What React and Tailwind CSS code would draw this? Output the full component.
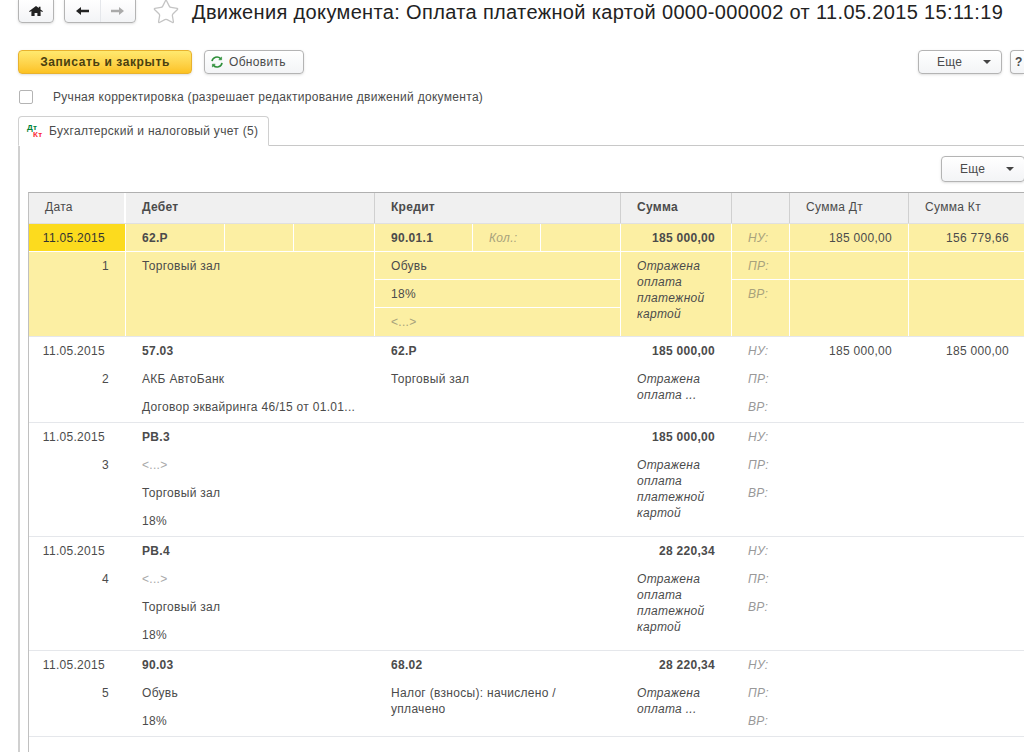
import React from 'react';
import clsx from 'clsx';
import { Star } from 'lucide-react';

const gridCols = 'grid grid-cols-[97px_249px_246px_111px_58px_119px_116px]';
const btn = 'flex items-center border border-[#b4b4b4] bg-gradient-to-b from-white to-gray-100 shadow-sm text-xs tracking-wide text-[#4b4b4b]';

const rows = [
  {
    selected: true,
    date: '11.05.2015', n: 1, debit: '62.Р', debitSub: ['Торговый зал'],
    credit: '90.01.1', creditSub: ['Обувь', '18%', '<...>'],
    sum: '185 000,00', note: 'Отражена оплата платежной картой', dt: '185 000,00', kt: '156 779,66',
  },
  {
    date: '11.05.2015', n: 2, debit: '57.03', debitSub: ['АКБ АвтоБанк', 'Договор эквайринга 46/15 от 01.01...'],
    credit: '62.Р', creditSub: ['Торговый зал'],
    sum: '185 000,00', note: 'Отражена оплата ...', dt: '185 000,00', kt: '185 000,00',
  },
  {
    date: '11.05.2015', n: 3, debit: 'РВ.3', debitSub: ['<...>', 'Торговый зал', '18%'],
    sum: '185 000,00', note: 'Отражена оплата платежной картой',
  },
  {
    date: '11.05.2015', n: 4, debit: 'РВ.4', debitSub: ['<...>', 'Торговый зал', '18%'],
    sum: '28 220,34', note: 'Отражена оплата платежной картой',
  },
  {
    date: '11.05.2015', n: 5, debit: '90.03', debitSub: ['Обувь', '18%'],
    credit: '68.02', creditSub: ['Налог (взносы): начислено / уплачено'],
    sum: '28 220,34', note: 'Отражена оплата ...',
  },
];

const Caret = () => (
  <svg width="8" height="4" viewBox="0 0 8 4" className="fill-[#444444]">
    <path d="M0 0h8L4 4z" />
  </svg>
);

const MoreButton = ({ className }) => (
  <button className={clsx(btn, 'w-21 shrink-0 justify-between rounded pl-4.5 pr-2.5', className)}>
    <span>Еще</span>
    <Caret />
  </button>
);

const Sub = ({ selected, line = true, className, children }) => (
  <div className={clsx('h-7 shrink-0 pt-1.5 leading-4', selected && line && 'border-b border-white', className)}>
    {children}
  </div>
);

const Column = ({ selected, className, children }) => (
  <div className={clsx('flex flex-col border-r', selected ? 'border-white' : 'border-transparent', className)}>
    {children}
  </div>
);

const isPlaceholder = (text) => text === '<...>';

const Row = ({ row }) => {
  const { selected } = row;
  const label = selected ? 'italic text-[#a8a27c]' : 'italic text-[#999999]';
  return (
    <div className={clsx(gridCols, 'border-b border-gray-200', selected ? 'bg-[#fcefa3]' : 'pb-px')}>
      <Column selected={selected}>
        <Sub selected={selected} className={clsx('pr-5 text-right', selected && 'bg-[#fcdb1e] text-[#333333]')}>
          {row.date}
        </Sub>
        <Sub className="pr-4 text-right">{row.n}</Sub>
      </Column>

      <Column selected={selected}>
        <Sub selected={selected} className="flex !pt-0">
          <div className={clsx('w-[99px] pl-4 pt-1.5 font-bold', selected && 'border-r border-white')}>{row.debit}</div>
          {selected && <div className="w-[69px] border-r border-white" />}
        </Sub>
        {row.debitSub.map((text, i) => (
          <Sub key={i} className={clsx('truncate px-4', isPlaceholder(text) && 'text-[#a8a8a8]')}>{text}</Sub>
        ))}
      </Column>

      <Column selected={selected}>
        <Sub selected={selected} className="flex !pt-0">
          <div className={clsx('w-[98px] pl-4 pt-1.5 font-bold', selected && 'border-r border-white')}>{row.credit}</div>
          {selected && (
            <div className={clsx('w-[68px] border-r border-white pl-4 pt-1.5', label)}>Кол.:</div>
          )}
        </Sub>
        {(row.creditSub || []).map((text, i) => (
          <Sub
            key={i}
            selected={selected}
            line={i < 2}
            className={clsx('px-4', isPlaceholder(text) && 'text-[#a8a27c]')}
          >
            {text}
          </Sub>
        ))}
      </Column>

      <Column selected={selected}>
        <Sub selected={selected} className="pr-4 text-right font-bold">{row.sum}</Sub>
        <div className="px-4 pt-1.5 italic leading-4">{row.note}</div>
      </Column>

      <Column selected={selected} className={label}>
        <Sub selected={selected} className="pl-4">НУ:</Sub>
        <Sub selected={selected} className="pl-4">ПР:</Sub>
        <Sub className="pl-4">ВР:</Sub>
      </Column>

      <Column selected={selected}>
        <Sub selected={selected} className="pr-4 text-right">{row.dt}</Sub>
        <Sub selected={selected} />
      </Column>

      <div className="flex flex-col">
        <Sub selected={selected} className="pr-4 text-right">{row.kt}</Sub>
        <Sub selected={selected} />
      </div>
    </div>
  );
};

const App = () => {
  return (
    <div className="flex h-screen w-full flex-col overflow-hidden bg-white pl-4.5 font-['Liberation_Sans',Arial,sans-serif] text-xs tracking-wide text-[#4b4b4b]">
      {/* title */}
      <div className="flex h-6 shrink-0 items-start">
        <button className={clsx(btn, '-mt-px h-6 w-9 justify-center rounded-b')}>
          <svg width="14" height="10" viewBox="0 0 14 10" className="fill-[#222222]">
            <path d="M7 0 0 5.2l.8.9L2.4 5v5h3.2V7h2.8v3h3.2V5l1.6 1.1.8-.9L11.5 3.4V.8H9.8v1.3z" />
          </svg>
        </button>
        <div className={clsx(btn, '-mt-px ml-2.5 h-6 w-18 rounded-b')}>
          <button className="flex h-full flex-1 items-center justify-center border-r border-gray-200">
            <svg width="13" height="8" viewBox="0 0 13 8" className="fill-[#222222]">
              <path d="M5 0 0 4l5 4V5.3h8V2.7H5z" />
            </svg>
          </button>
          <button className="flex h-full flex-1 items-center justify-center">
            <svg width="13" height="8" viewBox="0 0 13 8" className="fill-[#aaaaaa]">
              <path d="M8 0l5 4-5 4V5.3H0V2.7h8z" />
            </svg>
          </button>
        </div>
        <Star className="-mt-0.5 ml-4 size-7 text-[#c4c4c4]" strokeWidth={1.1} />
        <h1 className="ml-3 whitespace-nowrap text-xl font-normal leading-6 tracking-[0.35px] text-[#222222]">
          Движения документа: Оплата платежной картой 0000-000002 от 11.05.2015 15:11:19
        </h1>
      </div>

      {/* toolbar */}
      <div className="mt-6 flex shrink-0 items-center pt-0.5">
        <button className="flex h-6 w-43.5 items-center justify-center rounded border border-[#e8b22e] bg-gradient-to-b from-[#ffe96e] to-[#fcc21f] text-xs font-bold tracking-wider text-[#4a3f10] shadow-sm">
          Записать и закрыть
        </button>
        <button className={clsx(btn, 'ml-3 h-6 w-25 gap-1.5 rounded pl-1.5')}>
          <svg width="12" height="12" viewBox="0 0 12 12" fill="none" className="stroke-[#2f8f3a]" strokeWidth="1.6">
            <path d="M1 5.2A5 5 0 0 1 9.6 2.6" />
            <path d="M11 6.8a5 5 0 0 1-8.6 2.6" />
            <path d="M7.6 3.8h3V.8" className="fill-[#2f8f3a]" strokeWidth="0.6" />
            <path d="M4.4 8.2h-3v3" className="fill-[#2f8f3a]" strokeWidth="0.6" />
          </svg>
          Обновить
        </button>
        <div className="ml-auto flex items-center gap-2">
          <MoreButton className="h-6" />
          <button className={clsx(btn, 'h-6 w-3.5 rounded-l border-r-0 pl-1 font-bold')}>?</button>
        </div>
      </div>

      {/* manual edit */}
      <div className="mt-4 flex h-3.5 shrink-0 items-center">
        <span className="ml-px size-3.5 rounded-xs border border-[#b4b4b4] bg-white" />
        <span className="ml-5">Ручная корректировка (разрешает редактирование движений документа)</span>
      </div>

      {/* tabs */}
      <div className="mt-3 flex h-7.5 shrink-0 items-end border-b border-[#c8c8c8]">
        <div className="-mb-px flex h-7.5 items-center gap-1.5 rounded-t border border-[#d0d0d0] border-b-white bg-white pl-2 pr-2.5">
          <span className="flex w-4 flex-col text-[8px] font-bold leading-[7px]">
            <span className="text-green-700">Дт</span>
            <span className="pl-1.5 text-red-500">Кт</span>
          </span>
          <span>Бухгалтерский и налоговый учет (5)</span>
        </div>
      </div>

      {/* tab page */}
      <div className="flex min-h-0 flex-1 flex-col border-l-2 border-[#d0d0d0] pl-2">
        <div className="flex w-max flex-1 flex-col">
          <div className="mt-2.5 flex justify-end">
            <MoreButton className="h-6.5" />
          </div>
          <div className="mt-2.5 flex flex-1 flex-col border-l border-t border-l-[#c0c0c0] border-t-[#b0b0b0]">
            <div className={clsx(gridCols, '-mb-px h-8 border-b-2 border-[#e0e0e0] bg-[#f0f0f0] leading-7')}>
              <div className="border-r-2 border-white pl-4">Дата</div>
              <div className="border-r border-[#d0d0d0] pl-4 font-bold">Дебет</div>
              <div className="border-r border-[#d0d0d0] pl-4 font-bold">Кредит</div>
              <div className="border-r border-[#d0d0d0] pl-4 font-bold">Сумма</div>
              <div className="border-r border-[#d0d0d0]" />
              <div className="border-r border-[#d0d0d0] pl-4">Сумма Дт</div>
              <div className="pl-4">Сумма Кт</div>
            </div>
            {rows.map((row) => (
              <Row key={row.n} row={row} />
            ))}
          </div>
        </div>
      </div>
    </div>
  );
};

export default App;
